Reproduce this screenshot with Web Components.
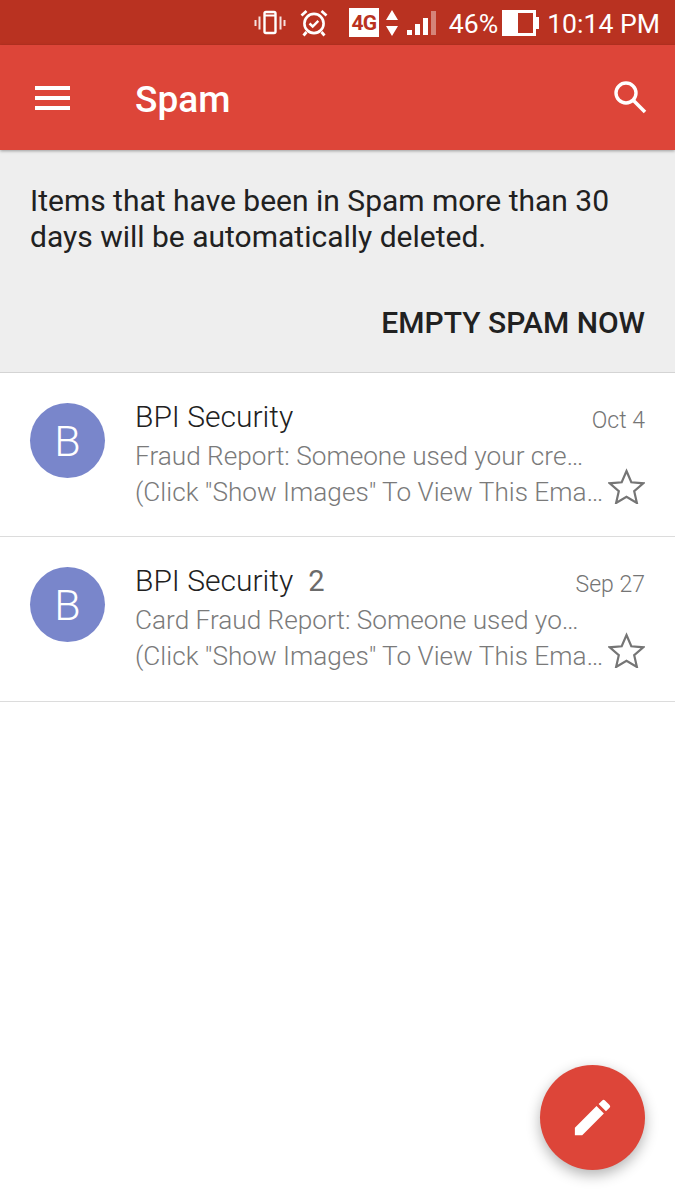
<!DOCTYPE html>
<html>
<head>
<meta charset="utf-8">
<title>Spam</title>
<style>
  html, body { margin: 0; height: 1200px; overflow: hidden; background: #fff; }
  body { font-family: Roboto, "Liberation Sans", sans-serif; }
  app-shell { height: 1200px; }
</style>
</head>
<body>
<app-shell>
  <status-bar></status-bar>
  <app-bar>Spam</app-bar>
  <spam-notice action="EMPTY SPAM NOW">Items that have been in Spam more than 30 days will be automatically deleted.</spam-notice>
  <mail-row initial="B" date="Oct 4">
    <span slot="name">BPI Security</span>
    <span slot="subject">Fraud Report: Someone used your cre…</span>
    <span slot="snippet">(Click "Show Images" To View This Ema…</span>
  </mail-row>
  <mail-row initial="B" date="Sep 27" count="2" style="height:165px">
    <span slot="name">BPI Security</span>
    <span slot="subject">Card Fraud Report: Someone used yo…</span>
    <span slot="snippet">(Click "Show Images" To View This Ema…</span>
  </mail-row>
  <compose-fab></compose-fab>
</app-shell>

<script>
// Page frame: everything stacks in a column, the FAB floats over it.
class AppShell extends HTMLElement {
  connectedCallback() {
    this.attachShadow({ mode: 'open' }).innerHTML = `
      <style>
        :host { display: flex; flex-direction: column; position: relative; }
      </style>
      <slot></slot>
    `
  }
}

class StatusBar extends HTMLElement {
  connectedCallback() {
    this.attachShadow({ mode: 'open' }).innerHTML = `
      <style>
        :host {
          display: flex;
          align-items: center;
          justify-content: flex-end;
          height: 45px;
          flex: none;
          padding-right: 15px;
          background: #b93221;
          color: #fff;
          font-size: 26.6px;
          font-weight: 400;
        }
        svg { display: block; flex: none; }
        span { padding-top: 2px; }
        .g4 {
          width: 30px; height: 29px; margin-left: 20px;
          background: #fff; color: #b93221;
          font-size: 21px; font-weight: 700; letter-spacing: -1px;
          display: flex; align-items: center; justify-content: center;
        }
        .pct { margin-left: 13px; }
        .time { margin-left: 7px; }
      </style>
      <!-- vibrate -->
      <svg width="32" height="28" viewBox="0 0 32 28" fill="none" stroke="#fff">
        <rect x="10.5" y="3" width="11" height="21" rx="1.5" stroke-width="2.4"/>
        <path d="M10 6.5h12" stroke-width="2"/>
        <path d="M5.500 7.500v13M1.500 11v6M26.500 7.500v13M30.500 11v6" stroke-width="2" opacity=".85"/>
      </svg>
      <!-- alarm -->
      <svg width="30" height="30" viewBox="0 0 30 30" fill="none" stroke="#fff" style="margin-left:13px">
        <circle cx="15" cy="15.500" r="9.600" stroke-width="2.600"/>
        <path d="M10.500 15.500l3.200 3 5.600-5.600" stroke-width="2.400"/>
        <path d="M2.500 7.500l5-4.500M27.500 7.500l-5-4.500M7.500 24l-3 3.500M22.500 24l3 3.500" stroke-width="2.800"/>
      </svg>
      <div class="g4">4G</div>
      <!-- data arrows -->
      <svg width="14" height="28" viewBox="0 0 14 28" fill="#fff" style="margin-left:6px">
        <path d="M7 1l6 10H1zM7 27L1 17h12z"/>
      </svg>
      <!-- signal -->
      <svg width="30" height="26" viewBox="0 0 30 26" fill="#fff" style="margin-left:7px">
        <rect x="1" y="20" width="5" height="5"/>
        <rect x="9" y="14" width="5" height="11"/>
        <rect x="17" y="8" width="5" height="17"/>
        <rect x="25" y="1" width="5" height="24" opacity=".4"/>
      </svg>
      <span class="pct">46%</span>
      <!-- battery -->
      <svg width="38" height="28" viewBox="0 0 38 28" style="margin-left:4px">
        <path d="M0 1h34v7h3v12h-3v7H0z" fill="#fff"/>
        <rect x="16" y="4" width="15" height="20" fill="#b93221"/>
      </svg>
      <span class="time">10:14 PM</span>
    `
  }
}

class AppBar extends HTMLElement {
  connectedCallback() {
    this.attachShadow({ mode: 'open' }).innerHTML = `
      <style>
        :host {
          display: flex;
          align-items: center;
          height: 105px;
          flex: none;
          padding: 0 28px 0 35px;
          background: #dd4539;
          color: #fff;
          box-shadow: 0 1px 3px rgba(0,0,0,.35);
          position: relative;
          z-index: 1;
        }
        .title {
          flex: 1;
          margin-left: 65px;
          padding-top: 4px;
          font-size: 37px;
          font-weight: 500;
        }
        svg { display: block; flex: none; }
      </style>
      <svg width="35" height="24" viewBox="0 0 35 24" fill="#fff">
        <rect width="35" height="4"/>
        <rect y="10" width="35" height="4"/>
        <rect y="20" width="35" height="4"/>
      </svg>
      <div class="title"><slot></slot></div>
      <svg width="34" height="34" viewBox="0 0 34 34" fill="none" stroke="#fff" style="margin-top:-2px">
        <circle cx="13" cy="13" r="10" stroke-width="3.400"/>
        <path d="M20.500 20.500L32 32" stroke-width="3.600"/>
      </svg>
    `
  }
}

class SpamNotice extends HTMLElement {
  connectedCallback() {
    this.attachShadow({ mode: 'open' }).innerHTML = `
      <style>
        :host {
          display: flex;
          flex-direction: column;
          flex: none;
          height: 223px;
          box-sizing: border-box;
          padding: 33px 30px 0;
          background: #eeeeee;
          border-bottom: 1px solid #d4d4d4;
          color: #212121;
          font-size: 30px;
          line-height: 36px;
        }
        .action {
          margin-top: 50px;
          text-align: right;
          font-weight: 500;
          font-size: 30px;
        }
      </style>
      <div><slot></slot></div>
      <div class="action">${this.getAttribute('action')}</div>
    `
  }
}

class MailRow extends HTMLElement {
  connectedCallback() {
    const count = this.getAttribute('count')
    this.attachShadow({ mode: 'open' }).innerHTML = `
      <style>
        :host {
          display: flex;
          flex: none;
          height: 164px;
          box-sizing: border-box;
          padding: 30px 30px 0;
          border-bottom: 1px solid #dcdcdc;
          font-weight: 300;
        }
        .avatar {
          width: 75px; height: 75px; flex: none;
          border-radius: 50%;
          background: #7986cb;
          color: #fff;
          font-size: 43px;
          display: flex; align-items: center; justify-content: center;
        }
        .body { flex: 1; min-width: 0; margin-left: 30px; margin-top: -32px; padding-top: 28px; }
        .top { display: flex; align-items: baseline; justify-content: space-between; height: 36px; line-height: 36px; }
        .name { font-size: 30px; color: #212121; white-space: nowrap; }
        .count { font-size: 29px; color: #6b6b6b; font-weight: 400; margin-left: 15px; }
        .date { font-size: 23px; color: #757575; transform: translateY(1px); }
        .line { font-size: 26.2px; line-height: 36px; color: #7a7a7a; white-space: nowrap; }
        .subject { margin-top: 3px; }
        .bottom { display: flex; align-items: center; justify-content: space-between; height: 36px; }
        svg { display: block; flex: none; margin-bottom: 12px; }
      </style>
      <div class="avatar">${this.getAttribute('initial')}</div>
      <div class="body">
        <div class="top">
          <div><span class="name"><slot name="name"></slot></span>${count ? `<span class="count">${count}</span>` : ''}</div>
          <span class="date">${this.getAttribute('date')}</span>
        </div>
        <div class="line subject"><slot name="subject"></slot></div>
        <div class="bottom">
          <div class="line"><slot name="snippet"></slot></div>
          <svg width="37" height="36" viewBox="0 0 37 36" fill="none" stroke="#757575" stroke-width="2.200" stroke-linejoin="miter">
            <path d="M18.500 3l4.800 11.300 12 1-9.100 7.900 2.700 11.800-10.400-6.300-10.400 6.300 2.700-11.800-9.100-7.900 12-1z"/>
          </svg>
        </div>
      </div>
    `
  }
}

class ComposeFab extends HTMLElement {
  connectedCallback() {
    this.attachShadow({ mode: 'open' }).innerHTML = `
      <style>
        :host {
          position: absolute;
          left: 540px;
          top: 1065px;
          width: 105px;
          height: 105px;
          border-radius: 50%;
          background: #dd4539;
          box-shadow: 0 5px 14px rgba(0,0,0,.3);
          display: flex;
          align-items: center;
          justify-content: center;
        }
        svg { display: block; }
      </style>
      <svg width="47" height="47" viewBox="0 0 24 24" fill="#fff">
        <path d="M3 17.250V21h3.750L17.810 9.940l-3.750-3.750L3 17.250zM20.710 7.040a1 1 0 0 0 0-1.410l-2.340-2.340a1 1 0 0 0-1.410 0l-1.830 1.830 3.750 3.750 1.830-1.830z"/>
      </svg>
    `
  }
}

customElements.define('app-shell', AppShell)
customElements.define('status-bar', StatusBar)
customElements.define('app-bar', AppBar)
customElements.define('spam-notice', SpamNotice)
customElements.define('mail-row', MailRow)
customElements.define('compose-fab', ComposeFab)
</script>
</body>
</html>
